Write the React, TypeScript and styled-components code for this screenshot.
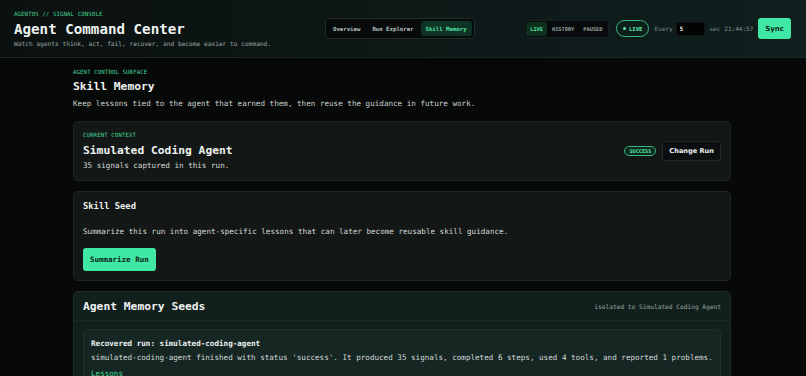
import React from 'react'
import styled, { createGlobalStyle } from 'styled-components'

const MONO = `'DejaVu Sans Mono', 'Liberation Mono', monospace`
const SANS = `'DejaVu Sans', 'Liberation Sans', sans-serif`

const GlobalStyle = createGlobalStyle`
  html, body {
    margin: 0;
    padding: 0;
    background: #070908;
    color: #e6ebe9;
    font-family: ${MONO};
  }
  * { box-sizing: border-box; }
`

const TABS = ['Overview', 'Run Explorer', 'Skill Memory']
const MODES = ['LIVE', 'HISTORY', 'PAUSED']

export default function App() {
  return (
    <Page>
      <GlobalStyle />
      <Header>
        <Brand>
          <Eyebrow>AGENTOS // SIGNAL CONSOLE</Eyebrow>
          <AppTitle>Agent Command Center</AppTitle>
          <Tagline>Watch agents think, act, fail, recover, and become easier to command.</Tagline>
        </Brand>
        <Tabs>
          {TABS.map((tab) => (
            <Tab key={tab} $active={tab === 'Skill Memory'}>{tab}</Tab>
          ))}
        </Tabs>
        <Controls>
          <Modes>
            {MODES.map((mode) => (
              <Mode key={mode} $active={mode === 'LIVE'}>{mode}</Mode>
            ))}
          </Modes>
          <LivePill>
            <Dot />
            LIVE
          </LivePill>
          <Muted>Every</Muted>
          <Interval value="5" readOnly />
          <Muted>sec</Muted>
          <Clock>21:44:57</Clock>
          <SyncButton>Sync</SyncButton>
        </Controls>
      </Header>

      <Main>
        <Intro>
          <Eyebrow>AGENT CONTROL SURFACE</Eyebrow>
          <PageTitle>Skill Memory</PageTitle>
          <Lead>Keep lessons tied to the agent that earned them, then reuse the guidance in future work.</Lead>
        </Intro>

        <Card>
          <ContextRow>
            <div>
              <Eyebrow>CURRENT CONTEXT</Eyebrow>
              <CardTitle>Simulated Coding Agent</CardTitle>
              <Body>35 signals captured in this run.</Body>
            </div>
            <ContextActions>
              <Badge>SUCCESS</Badge>
              <GhostButton>Change Run</GhostButton>
            </ContextActions>
          </ContextRow>
        </Card>

        <Card>
          <SectionTitle>Skill Seed</SectionTitle>
          <SeedText>Summarize this run into agent-specific lessons that can later become reusable skill guidance.</SeedText>
          <PrimaryButton>Summarize Run</PrimaryButton>
        </Card>

        <SeedsPanel>
          <SeedsHeader>
            <CardTitle>Agent Memory Seeds</CardTitle>
            <Scope>isolated to Simulated Coding Agent</Scope>
          </SeedsHeader>
          <SeedItem>
            <SeedName>Recovered run: simulated-coding-agent</SeedName>
            <SeedSummary>
              simulated-coding-agent finished with status 'success'. It produced 35 signals, completed 6 steps, used 4 tools, and reported 1 problems.
            </SeedSummary>
            <Lessons>Lessons</Lessons>
          </SeedItem>
        </SeedsPanel>
      </Main>
    </Page>
  )
}

const Page = styled.div`
  min-height: 376px;
  background: #070908;
`

const Header = styled.header`
  display: flex;
  align-items: center;
  height: 58px;
  padding: 0 15px 0 14px;
  border-bottom: 1px solid #1a2624;
  background: linear-gradient(90deg, #0b1110 0%, #0d1716 45%, #0f1f1e 100%);
`

const Brand = styled.div`
  display: flex;
  flex-direction: column;
  width: 311px;
  padding-top: 1px;
`

const Eyebrow = styled.div`
  font-size: 5.7px;
  line-height: 8px;
  letter-spacing: 0.02em;
  color: #45d494;
  text-transform: uppercase;
`

const AppTitle = styled.h1`
  margin: 2px 0 0;
  font-size: 14.2px;
  line-height: 18px;
  font-weight: 700;
  color: #eef2f0;
`

const Tagline = styled.div`
  margin-top: 1px;
  font-size: 6.2px;
  line-height: 9px;
  color: #9aa6a2;
`

const Tabs = styled.nav`
  display: flex;
  gap: 2px;
  padding: 2px;
  height: 21px;
  border: 1px solid #1f2b29;
  border-radius: 4px;
  background: #080b0b;
`

const Tab = styled.button<{ $active?: boolean }>`
  border: 0;
  border-radius: 3px;
  padding: 0 5px;
  font-family: ${MONO};
  font-size: 5.7px;
  font-weight: 700;
  color: ${({ $active }) => ($active ? '#4fe6a2' : '#b9c3c0')};
  background: ${({ $active }) => ($active ? '#0f3326' : 'transparent')};
`

const Controls = styled.div`
  display: flex;
  align-items: center;
  margin-left: auto;
`

const Modes = styled.div`
  display: flex;
  height: 18px;
  padding: 1px;
  border-radius: 4px;
  background: #080b0b;
  border: 1px solid #16201e;
`

const Mode = styled.span<{ $active?: boolean }>`
  display: flex;
  align-items: center;
  padding: 0 4.5px;
  border-radius: 3px;
  font-size: 5.3px;
  font-weight: 700;
  color: ${({ $active }) => ($active ? '#4fe6a2' : '#9aa6a2')};
  background: ${({ $active }) => ($active ? '#10301f' : 'transparent')};
`

const LivePill = styled.span`
  display: flex;
  align-items: center;
  gap: 3px;
  height: 17px;
  margin-left: 7px;
  padding: 0 6px;
  border: 1px solid #3ab785;
  border-radius: 9px;
  background: #0c2019;
  font-size: 5.6px;
  font-weight: 700;
  color: #5de8a9;
`

const Dot = styled.i`
  width: 3px;
  height: 3px;
  border-radius: 50%;
  background: #5de8a9;
`

const Muted = styled.span`
  margin-left: 5px;
  font-size: 6px;
  color: #7f8b88;
`

const Interval = styled.input`
  width: 29px;
  height: 14px;
  margin-left: 3px;
  padding: 0 3px;
  border: 1px solid #111;
  border-radius: 2px;
  background: #020303;
  color: #e6ebe9;
  font-family: ${MONO};
  font-size: 6px;
  font-weight: 700;
  outline: none;
`

const Clock = styled.span`
  margin-left: 4px;
  font-size: 6px;
  color: #8b9693;
`

const SyncButton = styled.button`
  height: 21px;
  margin-left: 5px;
  padding: 0 7px;
  border: 0;
  border-radius: 3px;
  background: #3fe8a4;
  color: #0b1f16;
  font-family: ${SANS};
  font-size: 7px;
  font-weight: 700;
`

const Main = styled.main`
  display: flex;
  flex-direction: column;
  gap: 10px;
  width: 658px;
  margin: 0 auto 0 73px;
  padding-top: 10px;
`

const Intro = styled.section`
  padding-bottom: 3px;
`

const PageTitle = styled.h2`
  margin: 4px 0 0;
  font-size: 11.3px;
  line-height: 14px;
  font-weight: 700;
  color: #eef2f0;
`

const Lead = styled.p`
  margin: 5px 0 0;
  font-size: 7.6px;
  line-height: 9px;
  color: #c9d0cd;
`

const Card = styled.section`
  padding: 9px 9px 9px;
  border: 1px solid #1f2523;
  border-radius: 5px;
  background: #131716;
`

const ContextRow = styled.div`
  display: flex;
  align-items: center;
  justify-content: space-between;
  padding-bottom: 1px;
`

const ContextActions = styled.div`
  display: flex;
  align-items: center;
  gap: 6px;
`

const CardTitle = styled.h3`
  margin: 4px 0 0;
  font-size: 11.3px;
  line-height: 15px;
  font-weight: 700;
  color: #eef2f0;
`

const Body = styled.p`
  margin: 3px 0 0;
  font-size: 7.6px;
  line-height: 9px;
  color: #d3d9d6;
`

const Badge = styled.span`
  padding: 1px 4px;
  border: 1px solid #3ab785;
  border-radius: 6px;
  background: #0d2a1e;
  font-size: 5.2px;
  font-weight: 700;
  color: #5de8a9;
`

const GhostButton = styled.button`
  height: 20px;
  padding: 0 6px;
  border: 1px solid #222a28;
  border-radius: 3px;
  background: #0c0f0f;
  color: #eef2f0;
  font-family: ${SANS};
  font-size: 6.6px;
  font-weight: 700;
`

const SectionTitle = styled.h3`
  margin: 0;
  font-size: 8.8px;
  line-height: 11px;
  font-weight: 700;
  color: #eef2f0;
`

const SeedText = styled.p`
  margin: 15px 0 0;
  font-size: 7.6px;
  line-height: 10px;
  color: #d3d9d6;
`

const PrimaryButton = styled.button`
  height: 23px;
  margin-top: 11px;
  padding: 0 7px;
  border: 0;
  border-radius: 3px;
  background: #3fe8a4;
  color: #0b1f16;
  font-family: ${MONO};
  font-size: 7.5px;
  font-weight: 700;
`

const SeedsPanel = styled.section`
  border: 1px solid #1f2d29;
  border-radius: 5px;
  background: #12201d;
  padding: 0 9px;
`

const SeedsHeader = styled.div`
  display: flex;
  align-items: center;
  justify-content: space-between;
  height: 29px;
  margin: 0 -9px;
  padding: 0 9px;
  border-bottom: 1px solid #1b2926;

  h3 {
    margin: 0;
  }
`

const Scope = styled.span`
  font-size: 6.2px;
  color: #9aa6a2;
`

const SeedItem = styled.div`
  margin-top: 8px;
  padding: 9px 7px 20px;
  border: 1px solid #1e302b;
  border-radius: 5px;
  background: #152623;
`

const SeedName = styled.div`
  font-size: 7.6px;
  line-height: 10px;
  font-weight: 700;
  color: #eef2f0;
`

const SeedSummary = styled.p`
  margin: 4px 0 0;
  font-size: 7.6px;
  line-height: 10px;
  color: #d3d9d6;
`

const Lessons = styled.div`
  margin-top: 6px;
  font-size: 7.6px;
  line-height: 9px;
  color: #45d494;
`
